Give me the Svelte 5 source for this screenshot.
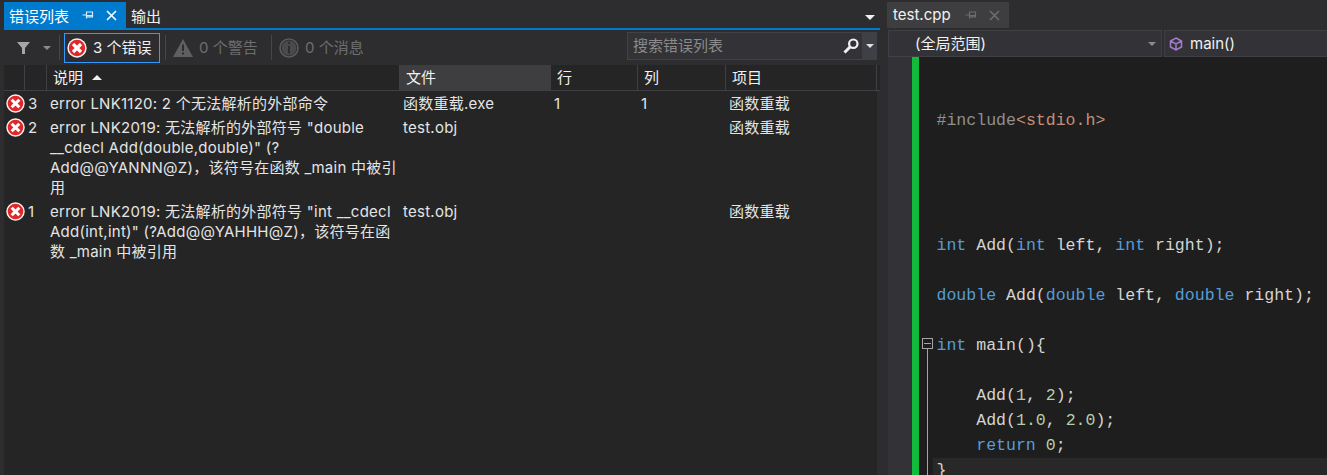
<script>
  const errors = [
    { n: 3, lines: ["error LNK1120: 2 个无法解析的外部命令"], file: "函数重载.exe", line: "1", col: "1", proj: "函数重载" },
    { n: 2, lines: ['error LNK2019: 无法解析的外部符号 "double', '__cdecl Add(double,double)" (?', "Add@@YANNN@Z)，该符号在函数 _main 中被引", "用"], file: "test.obj", line: "", col: "", proj: "函数重载" },
    { n: 1, lines: ['error LNK2019: 无法解析的外部符号 "int __cdecl', 'Add(int,int)" (?Add@@YAHHH@Z)，该符号在函', "数 _main 中被引用"], file: "test.obj", line: "", col: "", proj: "函数重载" },
  ];

  // each code line is a list of [class, text] pieces
  const code = [
    [], [],
    [["pre", "#include"], ["str", "<stdio.h>"]],
    [], [], [], [],
    [["kw", "int"], ["", " Add("], ["kw", "int"], ["", " left, "], ["kw", "int"], ["", " right);"]],
    [],
    [["kw", "double"], ["", " Add("], ["kw", "double"], ["", " left, "], ["kw", "double"], ["", " right);"]],
    [],
    [["kw", "int"], ["", " main(){"]],
    [],
    [["", "    Add("], ["num", "1"], ["", ", "], ["num", "2"], ["", ");"]],
    [["", "    Add("], ["num", "1.0"], ["", ", "], ["num", "2.0"], ["", ");"]],
    [["kw", "    return"], ["", " "], ["num", "0"], ["", ";"]],
    [["", "}"]],
  ];
</script>

{#snippet errorIcon(size)}
  <svg width={size} height={size} viewBox="0 0 20 20">
    <circle cx="10" cy="10" r="9.7" fill="#f4f4f4" />
    <circle cx="10" cy="10" r="8.2" fill="#e0272a" />
    <path d="M6 6 14 14M14 6 6 14" stroke="#fff" stroke-width="3.2" />
  </svg>
{/snippet}

{#snippet pin(color)}
  <svg width="12" height="10" viewBox="0 0 12 10">
    <path d="M0.5 5H4M4.5 1.5V8.5M4.5 2H10.5V7H4.5M4.5 5.6H10.5" fill="none" stroke={color} stroke-width="1.2" />
  </svg>
{/snippet}

{#snippet closeX(color)}
  <svg width="11" height="11" viewBox="0 0 11 11">
    <path d="M1 1 10 10M10 1 1 10" stroke={color} stroke-width="1.6" />
  </svg>
{/snippet}

<div class="page">
  <section class="left">
    <div class="tabs">
      <div class="tab active">
        <span>错误列表</span>
        {@render pin("#d6ebf7")}
        {@render closeX("#ffffff")}
      </div>
      <div class="tab plain">输出</div>
      <div class="tab-caret"></div>
    </div>

    <div class="toolbar">
      <svg class="filter" width="13" height="12" viewBox="0 0 13 12">
        <path d="M0 0H13L8 6V12H5V6Z" fill="#a6a6a6" />
      </svg>
      <i class="caret small"></i>
      <i class="sep first"></i>
      <button class="toggle on">
        {@render errorIcon(20)}
        <span>3 个错误</span>
      </button>
      <i class="sep"></i>
      <button class="toggle">
        <svg width="20" height="18" viewBox="0 0 20 18">
          <path d="M10 0 20 18H0Z" fill="#5f5f61" />
          <path d="M9 5.5H11V12H9ZM9 13.5H11V15.5H9Z" fill="#2d2d30" />
        </svg>
        <span>0 个警告</span>
      </button>
      <i class="sep"></i>
      <button class="toggle">
        <svg width="20" height="20" viewBox="0 0 20 20">
          <circle cx="10" cy="10" r="9" fill="none" stroke="#5a5a5c" stroke-width="1.6" />
          <circle cx="10" cy="10" r="7.4" fill="#4a4a4c" />
          <path d="M9 4H11V6H9ZM9 8H11V15.5H9Z" fill="#2d2d30" />
        </svg>
        <span>0 个消息</span>
      </button>
      <div class="search">
        <span class="placeholder">搜索错误列表</span>
        <svg class="glass" width="16" height="16" viewBox="0 0 16 16">
          <circle cx="10.3" cy="5.7" r="4.2" fill="none" stroke="#f1f1f1" stroke-width="2.2" />
          <path d="M7 9 1.5 14.5" stroke="#f1f1f1" stroke-width="3" />
        </svg>
        <div class="search-drop"><i class="caret small light"></i></div>
      </div>
    </div>

    <div class="grid head">
      <div class="h"></div>
      <div class="h"></div>
      <div class="h">说明<i class="sort"></i></div>
      <div class="h sorted">文件</div>
      <div class="h">行</div>
      <div class="h">列</div>
      <div class="h last">项目</div>
    </div>

    <div class="rows">
      {#each errors as e}
        <div class="grid row">
          <div class="ico">{@render errorIcon(19)}</div>
          <div class="no">{e.n}</div>
          <div class="desc">
            {#each e.lines as l}<div>{l}</div>{/each}
          </div>
          <div>{e.file}</div>
          <div class="num">{e.line}</div>
          <div class="num">{e.col}</div>
          <div>{e.proj}</div>
        </div>
      {/each}
    </div>
  </section>

  <section class="right">
    <div class="doc-tabs">
      <div class="doc-tab">
        <span>test.cpp</span>
        {@render pin("#6d6d70")}
        {@render closeX("#6d6d70")}
      </div>
    </div>
    <div class="nav">
      <div class="combo scope">
        <span>(全局范围)</span>
        <i class="caret small"></i>
      </div>
      <div class="combo member">
        <svg width="14" height="14" viewBox="0 0 14 14">
          <path d="M7 1 12.5 4V10L7 13 1.5 10V4ZM1.5 4 7 7 12.5 4M7 7V13" fill="none" stroke="#a37acc" stroke-width="1.5" />
        </svg>
        <span>main()</span>
      </div>
    </div>
    <div class="editor">
      <div class="gutter"></div>
      <div class="changed"></div>
      <div class="code">
        {#each code as parts, i}
          <div class="line" class:current={i === 16}>{#each parts as p}<span class={p[0]}>{p[1]}</span>{/each}</div>
        {/each}
        <div class="fold"></div>
        <div class="fold-line"></div>
      </div>
    </div>
  </section>
</div>

<style>
  :global(body) {
    margin: 0;
    background: #2d2d30;
  }

  .page {
    display: flex;
    height: 475px;
    overflow: hidden;
    color: #e4e4e4;
    font: 15px/20px Inter, "Noto Sans CJK SC", sans-serif;
  }

  .left {
    width: 876px;
    margin-left: 4px;
    display: flex;
    flex-direction: column;
  }

  .tabs {
    display: flex;
    align-items: stretch;
    height: 26px;
    margin-top: 2px;
  }

  .tab {
    display: flex;
    align-items: center;
    padding-top: 3px;
    box-sizing: border-box;
  }

  .tab.active {
    width: 122px;
    padding-left: 5px;
    background: #007acc;
    color: #fff;
  }

  .tab.active span {
    margin-right: 13px;
  }

  .tab.active svg {
    margin-top: -3px;
  }

  .tab.active svg:last-child {
    margin-left: 12px;
  }

  .tab.plain {
    margin-left: 5px;
    color: #f1f1f1;
  }

  .tab-caret {
    margin: 13px 5px 0 auto;
    width: 0;
    height: 0;
    border: 5px solid transparent;
    border-top-color: #f1f1f1;
    border-bottom: 0;
  }

  .toolbar {
    display: flex;
    align-items: center;
    height: 35px;
    border-top: 2px solid #007acc;
    box-sizing: content-box;
  }

  .filter {
    margin-left: 13px;
  }

  .caret {
    display: block;
    width: 0;
    height: 0;
    border: 4px solid transparent;
    border-top-color: #8c8c8c;
    border-bottom: 0;
  }

  .caret.light {
    border-top-color: #e0e0e0;
  }

  .toolbar > .caret {
    margin-left: 13px;
  }

  .sep {
    width: 1px;
    height: 25px;
    margin: 0 3px 0 4px;
    background: #46464a;
  }

  .sep.first {
    margin-left: 8px;
    margin-right: 4px;
  }

  .toggle {
    display: flex;
    align-items: center;
    gap: 6px;
    width: 96px;
    height: 30px;
    box-sizing: border-box;
    padding: 0 0 0 2px;
    border: 1px solid transparent;
    background: none;
    color: #6d6d6d;
    font: inherit;
    white-space: nowrap;
  }

  .toggle + .sep + .toggle {
    width: 98px;
    padding-left: 3px;
  }

  .toggle.on {
    border-color: #3399ff;
    color: #f1f1f1;
    margin-right: 1px;
  }

  .search {
    display: flex;
    align-items: center;
    width: 250px;
    height: 28px;
    box-sizing: border-box;
    margin-left: auto;
    margin-right: 3px;
    margin-top: -3px;
    background: #333337;
    border: 1px solid #434346;
    border-right: 0;
  }

  .placeholder {
    margin-left: 5px;
    color: #8a8a8a;
  }

  .glass {
    margin-left: auto;
    margin-right: 3px;
  }

  .search-drop {
    display: flex;
    align-items: center;
    justify-content: center;
    width: 15px;
    height: 28px;
    background: #3f3f46;
  }

  .grid {
    display: grid;
    grid-template-columns: 21px 22px 353px 151px 87px 88px 151px;
  }

  .head {
    height: 26px;
    box-sizing: border-box;
    border-bottom: 1px solid #3f3f46;
    background: #252526;
  }

  .h {
    display: flex;
    align-items: center;
    padding-left: 6px;
    box-sizing: border-box;
    border-right: 1px solid #3f3f46;
    color: #f1f1f1;
  }

  .h.sorted {
    background: #3e3e40;
    border-right: 0;
  }

  .sort {
    margin-left: 9px;
    width: 0;
    height: 0;
    border: 5px solid transparent;
    border-bottom-color: #f1f1f1;
    border-top: 0;
  }

  .rows {
    flex: 1;
    width: 873px;
    background: #252526;
  }

  .row {
    padding: 3px 0 1px;
    letter-spacing: 0.25px;
  }

  .row > div {
    padding-left: 3px;
  }

  .row > .ico {
    padding-left: 2px;
    height: 20px;
  }

  .row > .ico svg {
    display: block;
  }

  .row > .no {
    padding-left: 3px;
  }

  .row > .num {
    padding-left: 3px;
  }

  .desc {
    min-height: 20px;
    white-space: nowrap;
  }

  .right {
    flex: 1;
    min-width: 0;
    margin-left: 7px;
    display: flex;
    flex-direction: column;
  }

  .doc-tabs {
    height: 26px;
    margin-top: 2px;
  }

  .doc-tab {
    display: flex;
    align-items: center;
    width: 122px;
    height: 26px;
    box-sizing: border-box;
    padding-left: 6px;
    background: #3e3e40;
    color: #f1f1f1;
  }

  .doc-tab svg:first-of-type {
    margin-left: auto;
  }

  .doc-tab svg:last-of-type {
    margin-left: 12px;
    margin-right: 9px;
  }

  .nav {
    display: flex;
    gap: 2px;
    height: 27px;
    margin-top: 2px;
    margin-left: 1px;
  }

  .combo {
    display: flex;
    align-items: center;
    box-sizing: border-box;
    background: #333337;
    border: 1px solid #3f3f46;
    color: #f1f1f1;
  }

  .scope {
    width: 274px;
    padding: 0 5px 0 26px;
    justify-content: space-between;
  }

  .member {
    flex: 1;
    padding-left: 4px;
    gap: 7px;
    border-right: 0;
  }

  .editor {
    display: flex;
    flex: 1;
    min-height: 0;
    margin-left: 1px;
  }

  .gutter {
    width: 24px;
    background: #333337;
  }

  .changed {
    width: 7px;
    background: #12bb3c;
  }

  .code {
    position: relative;
    flex: 1;
    padding: 1px 0 0 17.5px;
    background: #1e1e1e;
    color: #d4d4d4;
    font: 16.56px/25px "Liberation Mono", monospace;
    white-space: pre;
  }

  .line {
    height: 25px;
  }

  .current {
    background: #282828;
    margin-left: -4px;
    padding-left: 4px;
  }

  .kw {
    color: #569cd6;
  }

  .pre {
    color: #8f8f8f;
  }

  .str {
    color: #c48f78;
  }

  .num {
    color: #b5cea8;
  }

  .row > .num {
    color: #e4e4e4;
  }

  .fold {
    position: absolute;
    left: 3px;
    top: 281px;
    width: 9px;
    height: 9px;
    border: 1px solid #a5a5a5;
    background: linear-gradient(#a5a5a5, #a5a5a5) center / 7px 1px no-repeat;
  }

  .fold-line {
    position: absolute;
    left: 8px;
    top: 292px;
    bottom: 0;
    width: 1px;
    background: #a5a5a5;
  }
</style>
